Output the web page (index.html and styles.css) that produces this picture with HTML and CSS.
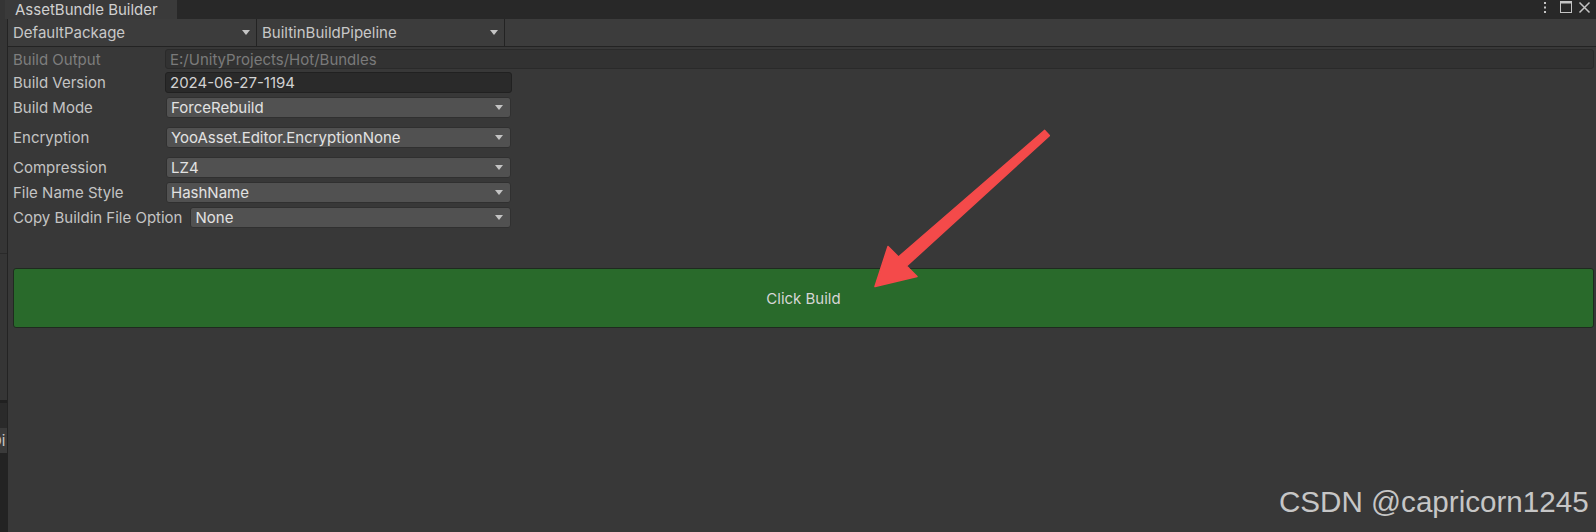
FILE: index.html
```html
<!DOCTYPE html>
<html>
<head>
<meta charset="utf-8">
<link rel="stylesheet" href="styles.css">
</head>
<body>
<div class="window">
  <div class="side">
    <div class="side-a"></div>
    <div class="side-b"></div>
    <div class="side-c"></div>
    <div class="side-d"><span>Di</span></div>
    <div class="side-e"></div>
  </div>
  <div class="main">
    <div class="tabbar">
      <div class="tab">AssetBundle Builder</div>
      <div class="win-icons">
        <svg class="ico kebab" width="6" height="14" viewBox="0 0 6 14"><rect x="2" y="2" width="2" height="2" fill="#c4c4c4"/><rect x="2" y="6.5" width="2" height="2" fill="#c4c4c4"/><rect x="2" y="11" width="2" height="2" fill="#c4c4c4"/></svg>
        <svg class="ico max" width="14" height="14" viewBox="0 0 14 14"><rect x="1.5" y="1.5" width="11" height="11" fill="none" stroke="#c4c4c4" stroke-width="1"/><rect x="1" y="1" width="12" height="2.5" fill="#c4c4c4"/></svg>
        <svg class="ico close" width="13" height="14" viewBox="0 0 13 14"><path d="M1.5 2.5 L11.5 12.5 M11.5 2.5 L1.5 12.5" stroke="#c4c4c4" stroke-width="1.5"/></svg>
      </div>
    </div>
    <div class="toolbar">
      <div class="tb-drop tb-first"><span>DefaultPackage</span><i class="tri"></i></div>
      <div class="tb-drop"><span>BuiltinBuildPipeline</span><i class="tri"></i></div>
    </div>
    <div class="content">
      <div class="row r1">
        <div class="label dim">Build Output</div>
        <div class="field disabled">E:/UnityProjects/Hot/Bundles</div>
      </div>
      <div class="row narrow r2">
        <div class="label">Build Version</div>
        <div class="field text">2024-06-27-1194</div>
      </div>
      <div class="row narrow r3">
        <div class="label">Build Mode</div>
        <div class="field drop"><span>ForceRebuild</span><i class="tri"></i></div>
      </div>
      <div class="row narrow r4">
        <div class="label">Encryption</div>
        <div class="field drop"><span>YooAsset.Editor.EncryptionNone</span><i class="tri"></i></div>
      </div>
      <div class="row narrow r5">
        <div class="label">Compression</div>
        <div class="field drop"><span>LZ4</span><i class="tri"></i></div>
      </div>
      <div class="row narrow r6">
        <div class="label">File Name Style</div>
        <div class="field drop"><span>HashName</span><i class="tri"></i></div>
      </div>
      <div class="row narrow r7">
        <div class="label auto">Copy Buildin File Option</div>
        <div class="field drop"><span>None</span><i class="tri"></i></div>
      </div>
      <div class="build-btn">Click Build</div>
    </div>
  </div>
</div>
<svg class="arrow" width="1596" height="532" viewBox="0 0 1596 532">
  <polygon points="1049.3,135.6 906.5,266 917,276.5 875,286.5 888,246.5 898.5,257 1044.7,130.4" fill="#f44a4a" stroke="#f44a4a" stroke-width="1.5" stroke-linejoin="round"/>
</svg>
<div class="watermark">CSDN @capricorn1245</div>
</body>
</html>
```

FILE: styles.css
```css
html, body {
  margin: 0;
  padding: 0;
  width: 1596px;
  height: 532px;
  overflow: hidden;
  background: #383838;
  font-family: Inter, "Noto Sans", sans-serif;
  font-size: 15px;
  color: #c4c4c4;
}

.window {
  display: flex;
  height: 532px;
}

.side {
  width: 7px;
  border-right: 1px solid #232323;
  display: flex;
  flex-direction: column;
  background: #353535;
  overflow: hidden;
}
.side-a { height: 253px; border-bottom: 1px solid #2a2a2a; }
.side-b { height: 146px; border-bottom: 3px solid #202020; }
.side-c { height: 25px; background: #2a2a2a; }
.side-d {
  height: 25px;
  background: #3a3a3a;
  overflow: hidden;
  line-height: 25px;
  font-size: 15px;
  color: #c8c8c8;
}
.side-d span { display: block; margin-left: -9px; white-space: nowrap; }
.side-e { flex: 1; background: #232323; }

.main {
  flex: 1;
  display: flex;
  flex-direction: column;
  min-width: 0;
}

.tabbar {
  height: 19px;
  background: #282828;
  display: flex;
  align-items: flex-start;
}
.tab {
  margin-left: -3px;
  width: 162px;
  height: 19px;
  padding-left: 10px;
  background: #3a3a3a;
  line-height: 19px;
  color: #d0d0d0;
  white-space: nowrap;
}
.win-icons {
  margin-left: auto;
  display: flex;
  align-items: flex-start;
  padding-right: 5px;
}
.ico { display: block; }
.max { margin-left: 11px; }
.close { margin-left: 5px; }

.toolbar {
  height: 27px;
  background: #3c3c3c;
  border-bottom: 1px solid #232323;
  display: flex;
}
.tb-drop {
  width: 248px;
  border-right: 1px solid #232323;
  display: flex;
  align-items: center;
  padding-left: 5px;
  padding-right: 6px;
  color: #c8c8c8;
  box-sizing: border-box;
  white-space: nowrap;
}
.tb-drop.tb-first { width: 249px; }
.tb-drop span { flex: 1; }

.tri {
  display: block;
  flex: none;
  width: 0;
  height: 0;
  border-left: 4px solid transparent;
  border-right: 4px solid transparent;
  border-top: 5px solid #c4c4c4;
}

.content {
  padding: 2px 2px 0 5px;
  display: flex;
  flex-direction: column;
}

.row {
  display: flex;
  align-items: center;
  height: 21px;
}
.row.narrow { width: 499px; }
.r1 { height: 20px; }
.r2 { margin-top: 3px; }
.r3 { margin-top: 4px; }
.r4 { margin-top: 9px; }
.r5 { margin-top: 9px; }
.r6 { margin-top: 4px; }
.r7 { margin-top: 4px; }

.label {
  width: 152px;
  flex: none;
  color: #c4c4c4;
  white-space: nowrap;
}
.label.dim { color: #7e7e7e; }
.label.auto { width: auto; margin-right: 8px; }

.field {
  flex: 1;
  min-width: 0;
  box-sizing: border-box;
  height: 100%;
  display: flex;
  align-items: center;
  padding: 0 7px 0 4px;
  border-radius: 3px;
  white-space: nowrap;
}
.field.disabled {
  background: #323232;
  border: 1px solid #2a2a2a;
  color: #7a7a7a;
}
.field.text {
  background: #2a2a2a;
  border: 1px solid #212121;
  color: #d2d2d2;
}
.field.drop {
  margin-left: 1px;
  margin-right: 1px;
  background: #515151;
  border: 1px solid #303030;
  color: #e2e2e2;
}
.r7 .field.drop { margin-left: 0; }
.field.drop span { flex: 1; }

.build-btn {
  margin-top: 40px;
  height: 60px;
  box-sizing: border-box;
  background: #296a2b;
  border: 1px solid #1f2a1f;
  border-radius: 3px;
  display: flex;
  align-items: center;
  justify-content: center;
  color: #d6d6d6;
}

.arrow {
  position: absolute;
  left: 0;
  top: 0;
  pointer-events: none;
}

.watermark {
  position: absolute;
  left: 1279px;
  top: 484px;
  font-family: "Liberation Sans", Arial, sans-serif;
  font-size: 29.6px;
  line-height: 36px;
  color: #c6c6c6;
  white-space: nowrap;
}
```
